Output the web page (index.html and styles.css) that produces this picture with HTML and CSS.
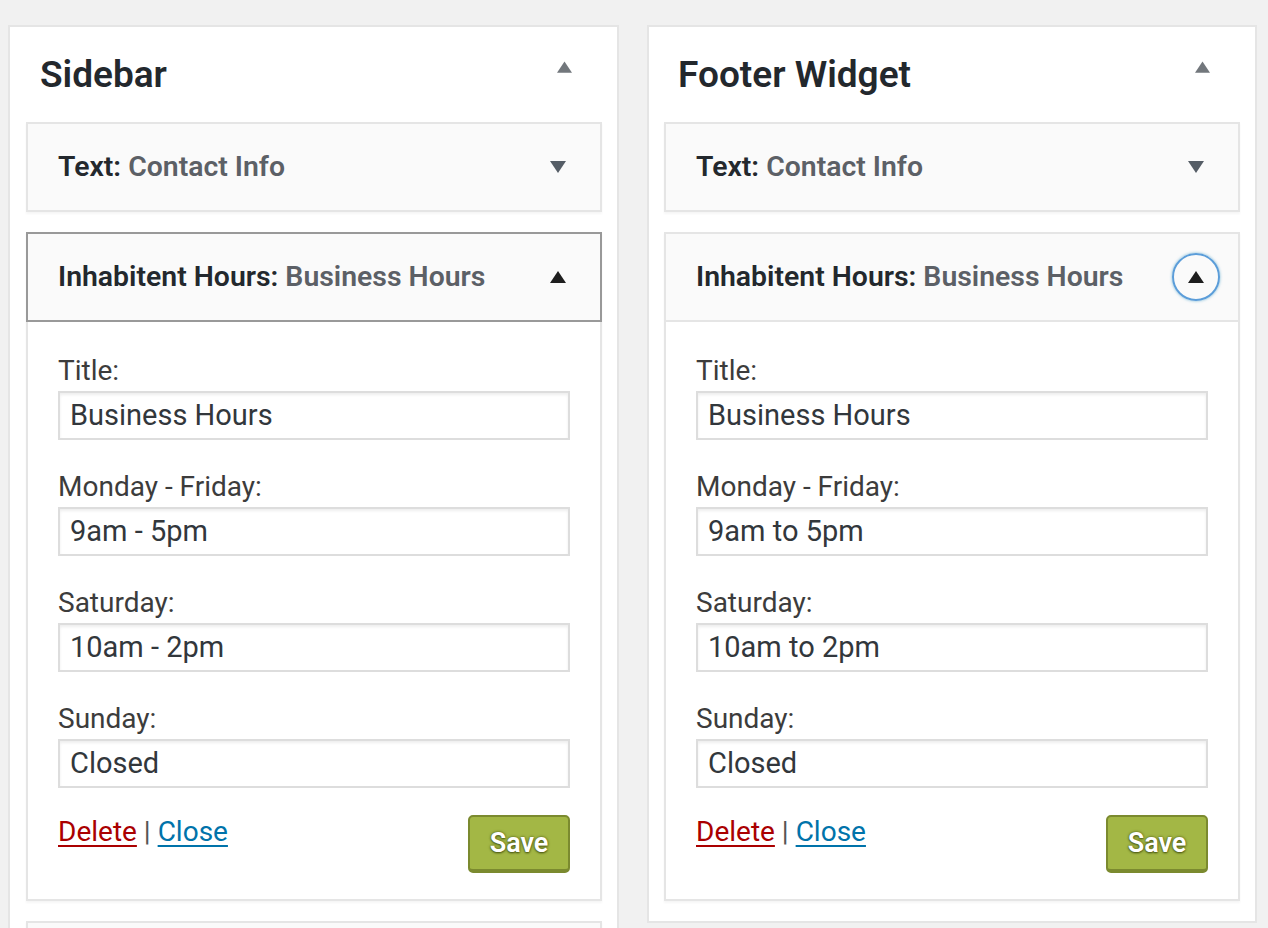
FILE: index.html
```html
<!DOCTYPE html>
<html lang="en">
<head>
<meta charset="utf-8">
<title>Widgets</title>
<link rel="stylesheet" href="styles.css">
</head>
<body>
<div class="page">
  <section class="area area-left">
    <div class="area-head">
      <h2>Sidebar</h2>
      <svg class="tri tri-head" viewBox="0 0 16 12"><polygon points="8,0 16,12 0,12"/></svg>
    </div>
    <div class="widget">
      <div class="widget-top">
        <h3><span class="wtype">Text:</span> <span class="wname">Contact Info</span></h3>
        <svg class="tri tri-down" viewBox="0 0 16 12"><polygon points="0,0 16,0 8,12"/></svg>
      </div>
    </div>
    <div class="widget open">
      <div class="widget-top focused">
        <h3><span class="wtype">Inhabitent Hours:</span> <span class="wname">Business Hours</span></h3>
        <svg class="tri tri-up" viewBox="0 0 16 12"><polygon points="8,0 16,12 0,12"/></svg>
      </div>
      <div class="widget-body">
        <div class="field"><label>Title:</label><div class="input">Business Hours</div></div>
        <div class="field"><label>Monday - Friday:</label><div class="input">9am - 5pm</div></div>
        <div class="field"><label>Saturday:</label><div class="input">10am - 2pm</div></div>
        <div class="field"><label>Sunday:</label><div class="input">Closed</div></div>
        <div class="actions">
          <div class="links"><a class="del" href="#">Delete</a> | <a class="close" href="#">Close</a></div>
          <button class="save">Save</button>
        </div>
      </div>
    </div>
    <div class="widget">
      <div class="widget-top"></div>
    </div>
  </section>
  <section class="area area-right">
    <div class="area-head">
      <h2>Footer Widget</h2>
      <svg class="tri tri-head" viewBox="0 0 16 12"><polygon points="8,0 16,12 0,12"/></svg>
    </div>
    <div class="widget">
      <div class="widget-top">
        <h3><span class="wtype">Text:</span> <span class="wname">Contact Info</span></h3>
        <svg class="tri tri-down" viewBox="0 0 16 12"><polygon points="0,0 16,0 8,12"/></svg>
      </div>
    </div>
    <div class="widget open">
      <div class="widget-top">
        <h3><span class="wtype">Inhabitent Hours:</span> <span class="wname">Business Hours</span></h3>
        <span class="focus-ring"><svg class="tri tri-up" viewBox="0 0 16 12"><polygon points="8,0 16,12 0,12"/></svg></span>
      </div>
      <div class="widget-body">
        <div class="field"><label>Title:</label><div class="input">Business Hours</div></div>
        <div class="field"><label>Monday - Friday:</label><div class="input">9am to 5pm</div></div>
        <div class="field"><label>Saturday:</label><div class="input">10am to 2pm</div></div>
        <div class="field"><label>Sunday:</label><div class="input">Closed</div></div>
        <div class="actions">
          <div class="links"><a class="del" href="#">Delete</a> | <a class="close" href="#">Close</a></div>
          <button class="save">Save</button>
        </div>
      </div>
    </div>
  </section>
</div>
</body>
</html>
```

FILE: styles.css
```css
html, body {
  margin: 0;
  padding: 0;
  background: #f1f1f1;
  height: 928px;
  overflow: hidden;
}
body {
  font-family: Roboto, "Noto Sans", sans-serif;
  color: #444;
}
.page {
  display: flex;
  gap: 28px;
  padding: 25px 0 0 8px;
  align-items: flex-start;
}
.area {
  background: #fff;
  border: 2px solid #e5e5e5;
  box-sizing: border-box;
  padding: 0 15px 20px 16px;
}
.area-left { width: 611px; }
.area-right { width: 610px; padding-left: 15px; }
.area-head {
  height: 95px;
  display: flex;
  align-items: center;
  justify-content: space-between;
  padding: 0 30px 0 14px;
}
.area-head h2 {
  margin: 0;
  font-size: 37px;
  font-weight: 600;
  color: #23282d;
  line-height: 1;
}
.tri { width: 16px; height: 12px; display: block; }
.tri-head { fill: #72777c; margin-bottom: 16px; width: 15px; }
.tri-down { fill: #555d66; }
.tri-up { fill: #1e1e1e; }

.widget {
  margin-bottom: 20px;
  box-shadow: 0 2px 2px rgba(0,0,0,.04);
}
.widget:last-child { margin-bottom: 0; }
.widget-top {
  height: 86px;
  border: 2px solid #e5e5e5;
  background: #fafafa;
  display: flex;
  align-items: center;
  justify-content: space-between;
  padding: 0 34px 0 30px;
}
.widget-top.focused { border-color: #999; }
.widget-top h3 {
  margin: 0;
  font-size: 28.4px;
  font-weight: 600;
  line-height: 1;
  color: #23282d;
}
.wname { color: #5c6066; }
.focus-ring {
  width: 44px;
  height: 44px;
  margin-right: -16px;
  border: 2px solid #5b9dd9;
  border-radius: 50%;
  box-shadow: 0 0 3px rgba(30,140,190,.6);
  display: flex;
  align-items: center;
  justify-content: center;
}
.widget-body {
  border: 2px solid #e5e5e5;
  border-top: none;
  background: #fff;
  padding: 35px 30px 26px 30px;
}
.field + .field { margin-top: 33px; }
.field label {
  display: block;
  font-size: 28px;
  line-height: 28px;
  color: #3c3c3c;
  margin-bottom: 6px;
}
.input {
  height: 49px;
  box-sizing: border-box;
  border: 2px solid #ddd;
  box-shadow: inset 0 2px 3px rgba(0,0,0,.07);
  padding: 0 10px;
  font-size: 29px;
  line-height: 45px;
  color: #32373c;
}
.actions {
  margin-top: 27px;
  display: flex;
  justify-content: space-between;
  align-items: flex-start;
}
.links {
  padding-top: 3px;
  font-size: 28px;
  line-height: 28px;
  color: #555;
}
.links a { text-decoration: underline; text-underline-offset: 4px; text-decoration-thickness: 2px; }
.del { color: #a00; }
.close { color: #0073aa; }
.save {
  width: 102px;
  height: 58px;
  box-sizing: border-box;
  background: #a3b745;
  border: 2px solid #7b8a2f;
  border-bottom-width: 4px;
  border-radius: 5px;
  color: #fff;
  font-family: Roboto, "Noto Sans", sans-serif;
  font-size: 27px;
  font-weight: 600;
  text-shadow: 0 0 3px #4d5a14, 0 1px 2px #4d5a14;
  padding: 0;
}
```
